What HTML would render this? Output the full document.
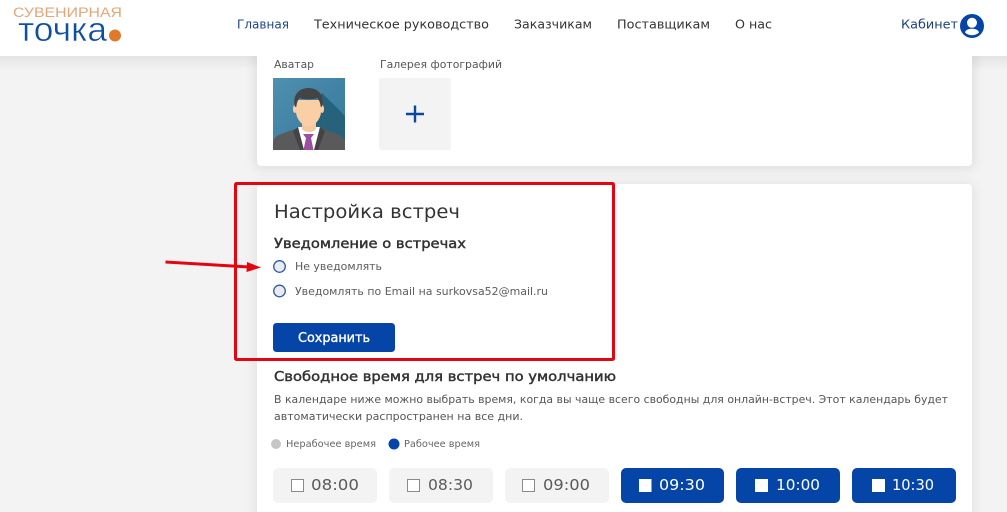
<!DOCTYPE html>
<html lang="ru">
<head>
<meta charset="utf-8">
<title>Настройка встреч</title>
<style>
html,body{margin:0;padding:0;width:1007px;height:512px;overflow:hidden;background:#f3f3f3}
svg{display:block;font-family:"DejaVu Sans","Liberation Sans",sans-serif}
</style>
</head>
<body>
<svg xmlns="http://www.w3.org/2000/svg" width="1007" height="512" viewBox="0 0 1007 512">
<defs>
<linearGradient id="hs" x1="0" y1="0" x2="0" y2="1"><stop offset="0" stop-color="#e4e4e4"/><stop offset="1" stop-color="#f3f3f3"/></linearGradient>
<linearGradient id="av" x1="0" y1="0" x2="1" y2="1"><stop offset="0" stop-color="#4f8fb0"/><stop offset="1" stop-color="#35789a"/></linearGradient>
<filter id="sh" x="-5%" y="-15%" width="110%" height="130%"><feGaussianBlur stdDeviation="6"/></filter>
<clipPath id="avc"><rect x="273" y="78" width="72" height="72"/></clipPath>
</defs>

<rect width="1007" height="512" fill="#f3f3f3"/>
<rect x="0" y="56" width="1007" height="14" fill="url(#hs)"/>

<rect x="255" y="50" width="719" height="118" fill="#000" opacity=".09" filter="url(#sh)"/>
<rect x="255" y="184" width="719" height="340" fill="#000" opacity=".07" filter="url(#sh)"/>
<rect x="257" y="40" width="715" height="126" rx="4" fill="#fff"/>
<rect x="257" y="184" width="715" height="340" rx="4" fill="#fff"/>

<rect width="1007" height="56" fill="#fff"/>

<text x="13" y="17" font-size="13.500" fill="#e2a679" textLength="109" lengthAdjust="spacingAndGlyphs" font-family="Liberation Sans">СУВЕНИРНАЯ</text>
<text x="18" y="41" font-size="34.500" fill="#0d4fa3" stroke="#fff" stroke-width=".5" textLength="89" lengthAdjust="spacingAndGlyphs" font-family="Liberation Sans">точка</text>
<circle cx="115" cy="35.500" r="6" fill="#dd7b2b"/>

<g font-size="12.800" fill="#333">
<text x="237" y="28.500" fill="#1d4389" textLength="52" lengthAdjust="spacingAndGlyphs">Главная</text>
<text x="314" y="28.500" textLength="175" lengthAdjust="spacingAndGlyphs">Техническое руководство</text>
<text x="514" y="28.500" textLength="78" lengthAdjust="spacingAndGlyphs">Заказчикам</text>
<text x="617" y="28.500" textLength="93" lengthAdjust="spacingAndGlyphs">Поставщикам</text>
<text x="735" y="28.500" textLength="37" lengthAdjust="spacingAndGlyphs">О нас</text>
<text x="901" y="28.500" fill="#1d3f7f" textLength="57" lengthAdjust="spacingAndGlyphs">Кабинет</text>
</g>
<circle cx="972" cy="26" r="12" fill="#0645a8"/>
<circle cx="972" cy="22.800" r="5" fill="#fff"/>
<path d="M965 32.500c.8-2.600 3.500-3.700 7-3.700s6.200 1.100 7 3.700c-1.700 1.700-4.200 2.700-7 2.700s-5.300-1-7-2.700z" fill="#fff"/>

<g font-size="11" fill="#555">
<text x="274" y="68" textLength="40" lengthAdjust="spacingAndGlyphs">Аватар</text>
<text x="380" y="68" textLength="122" lengthAdjust="spacingAndGlyphs">Галерея фотографий</text>
</g>

<g clip-path="url(#avc)">
<rect x="273" y="78" width="72" height="72" fill="url(#av)"/>
<path d="M322 93L345 116V150H320L300 130z" fill="#27627c"/>
<path d="M273 150v-8c1-5 5-7 11-9l14-5h22l14 5c6 2 10 4 11 9v8z" fill="#5a5a5c"/>
<path d="M298 127h22l-4 23h-14z" fill="#fff"/>
<path d="M298 127l-5 4 7 19h4zM320 127l5 4-7 19h-4z" fill="#444446"/>
<path d="M303 134h11l-3 4 2.500 12h-10l2.500-12z" fill="#9b4f9f"/>
<path d="M302 118h14v11c-3 4-11 4-14 0z" fill="#f4c9a0"/>
<ellipse cx="294.800" cy="109" rx="1.800" ry="4" fill="#fbcfa6"/>
<ellipse cx="322.200" cy="109" rx="1.800" ry="4" fill="#fbcfa6"/>
<path d="M296 100h25v11c0 8-6 15-12.500 15S296 119 296 111z" fill="#fbcfa6"/>
<path d="M295 107c-3-12 4-19 13.500-19s16.500 7 13.500 19l-1.500-.5c0-3-1-6-3-8.500-5 1.800-13 1.800-18 0-2 2.500-3 5.500-3 8.500z" fill="#444446"/>
</g>

<rect x="379" y="78" width="72" height="72" rx="2" fill="#f3f3f3"/>
<path d="M415 105.500v17M406 114h18" stroke="#0b479f" stroke-width="2.400" fill="none"/>

<text x="274" y="218" font-size="18.500" fill="#333" textLength="186" lengthAdjust="spacingAndGlyphs">Настройка встреч</text>
<text x="274" y="248" font-size="13.500" fill="#333" stroke="#333" stroke-width=".45" textLength="192" lengthAdjust="spacingAndGlyphs">Уведомление о встречах</text>

<circle cx="279.500" cy="266.500" r="5.800" fill="#e9ebf0" stroke="#2f5c9f" stroke-width="1.300"/>
<text x="295" y="270" font-size="10.800" fill="#5c5c5c" textLength="87" lengthAdjust="spacingAndGlyphs">Не уведомлять</text>
<circle cx="279.500" cy="291" r="5.800" fill="#e9ebf0" stroke="#2f5c9f" stroke-width="1.300"/>
<text x="295" y="295" font-size="10.800" fill="#5c5c5c" textLength="253" lengthAdjust="spacingAndGlyphs">Уведомлять по Email на surkovsa52@mail.ru</text>

<rect x="273" y="323" width="122" height="29" rx="3.500" fill="#0645a8"/>
<text x="298" y="342" font-size="13" fill="#fff" stroke="#fff" stroke-width=".35" textLength="72" lengthAdjust="spacingAndGlyphs">Сохранить</text>

<text x="274" y="381" font-size="13.500" fill="#333" stroke="#333" stroke-width=".45" textLength="342" lengthAdjust="spacingAndGlyphs">Свободное время для встреч по умолчанию</text>
<text x="274" y="403" font-size="10.800" fill="#555" textLength="674" lengthAdjust="spacingAndGlyphs">В календаре ниже можно выбрать время, когда вы чаще всего свободны для онлайн-встреч. Этот календарь будет</text>
<text x="274" y="420" font-size="10.800" fill="#555" textLength="249" lengthAdjust="spacingAndGlyphs">автоматически распространен на все дни.</text>

<circle cx="276" cy="444" r="5" fill="#c6c6c6"/>
<text x="286" y="447" font-size="9.500" fill="#666" textLength="90" lengthAdjust="spacingAndGlyphs">Нерабочее время</text>
<circle cx="394" cy="444" r="5.500" fill="#0645a8"/>
<text x="404" y="447" font-size="9.500" fill="#666" textLength="76" lengthAdjust="spacingAndGlyphs">Рабочее время</text>

<g fill="#f3f3f3">
<rect x="273" y="468" width="104" height="35" rx="5"/>
<rect x="389" y="468" width="104" height="35" rx="5"/>
<rect x="505" y="468" width="104" height="35" rx="5"/>
</g>
<g fill="#0645a8">
<rect x="621" y="468" width="103" height="35" rx="5"/>
<rect x="736" y="468" width="104" height="35" rx="5"/>
<rect x="852" y="468" width="104" height="35" rx="5"/>
</g>
<g fill="#fff" stroke="#8a8a8a" stroke-width="1">
<rect x="291.500" y="479.500" width="12" height="12"/>
<rect x="407.500" y="479.500" width="12" height="12"/>
<rect x="522.500" y="479.500" width="12" height="12"/>
</g>
<g fill="#fff">
<rect x="639" y="479" width="12.500" height="13"/>
<rect x="755" y="479" width="13" height="13"/>
<rect x="872" y="479" width="13" height="13"/>
</g>
<g font-size="15" fill="#5a5a5a">
<text x="311" y="490" textLength="48" lengthAdjust="spacingAndGlyphs">08:00</text>
<text x="428" y="490" textLength="45" lengthAdjust="spacingAndGlyphs">08:30</text>
<text x="543" y="490" textLength="47" lengthAdjust="spacingAndGlyphs">09:00</text>
</g>
<g font-size="15" fill="#fff">
<text x="659" y="490" textLength="46" lengthAdjust="spacingAndGlyphs">09:30</text>
<text x="776" y="490" textLength="44" lengthAdjust="spacingAndGlyphs">10:00</text>
<text x="892" y="490" textLength="42" lengthAdjust="spacingAndGlyphs">10:30</text>
</g>

<rect x="235.500" y="183.500" width="378" height="176" rx="1" fill="none" stroke="#e30611" stroke-width="3"/>
<path d="M165.500 262L249 267" stroke="#e30611" stroke-width="3" fill="none"/>
<path d="M247 262L261 267.500L246.500 272z" fill="#e30611"/>
</svg>
</body>
</html>
